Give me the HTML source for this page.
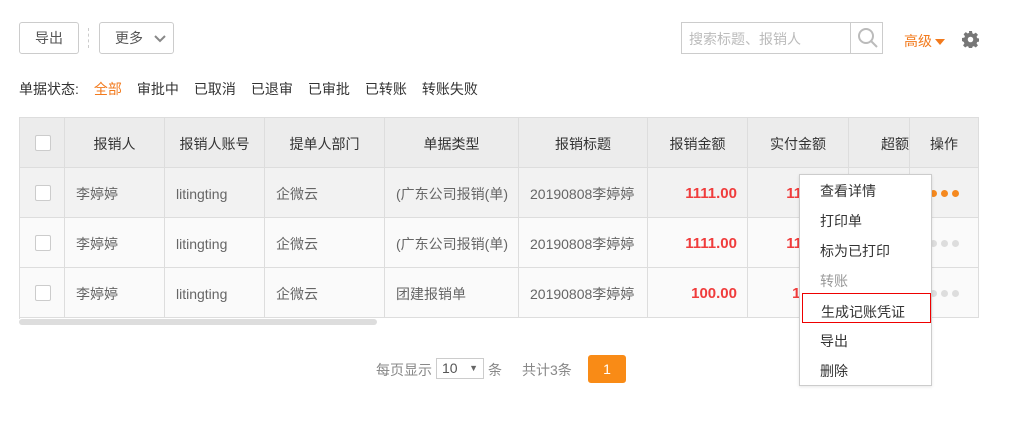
<!DOCTYPE html>
<html><head><meta charset="utf-8"><style>
*{box-sizing:border-box;margin:0;padding:0}
body{width:1015px;height:429px;background:#fff;font-family:"Liberation Sans","Noto Sans CJK SC",sans-serif;font-size:14px;color:#333;position:relative;overflow:hidden}
.a{position:absolute}
.btn{position:absolute;border:1px solid #ccc;border-radius:3px;height:32px;line-height:30px;text-align:center;color:#555;background:#fff}
.cell{position:absolute;border-right:1px solid #ddd;border-bottom:1px solid #ddd;white-space:nowrap;overflow:hidden;padding-left:11px;color:#666}
.h{background:#ececec;color:#333;text-align:center;padding-left:0}
.cb{width:16px;height:16px;border:1px solid #ccc;border-radius:2px;background:#fff;position:absolute;left:15px;top:17px}
.r{color:#f03c3c;font-weight:bold;font-size:15px;text-align:right;padding-right:10px;padding-left:0}
.dot{position:absolute;top:22px;width:7px;height:7px;border-radius:50%}
.mi{position:absolute;left:20px;color:#333;font-size:14px}
</style></head><body>
<div class="btn" style="left:19px;top:22px;width:60px">导出</div>
<div class="a" style="left:88px;top:28px;height:20px;border-left:1px dashed #ccc"></div>
<div class="btn" style="left:99px;top:22px;width:75px;text-align:left;padding-left:15px">更多 <svg width="12" height="8" style="position:absolute;left:54px;top:12px"><path d="M1 1l5 5 5-5" stroke="#888" stroke-width="2" fill="none"/></svg></div>
<div class="a" style="left:681px;top:22px;width:202px;height:32px;border:1px solid #ccc"><span style="position:absolute;left:7px;top:6px;color:#bbb;font-size:14px">搜索标题、报销人</span><div style="position:absolute;left:168px;top:0;height:30px;border-left:1px solid #ccc;width:32px"><svg width="22" height="22" style="position:absolute;left:6px;top:4px"><circle cx="9" cy="9" r="7" stroke="#bbb" stroke-width="2" fill="none"/><path d="M14 14l6 6" stroke="#bbb" stroke-width="2"/></svg></div></div>
<div class="a" style="left:904px;top:31px;color:#f27a1d">高级<svg width="10" height="6" style="margin-left:3px;vertical-align:middle"><path d="M0 0h10L5 6z" fill="#f27a1d"/></svg></div>
<svg class="a" style="left:962px;top:31px" width="17" height="17" viewBox="0 0 16 16"><path fill="#777" d="M6.6 0h2.8l.4 2.2 1.3.6 1.9-1.3 2 2-1.3 1.9.6 1.3 2.2.4v2.8l-2.2.4-.6 1.3 1.3 1.9-2 2-1.9-1.3-1.3.6-.4 2.2H6.6l-.4-2.2-1.3-.6-1.9 1.3-2-2 1.3-1.9-.6-1.3L0 9.4V6.6l2.2-.4.6-1.3-1.3-1.9 2-2 1.9 1.3 1.3-.6z"/><circle cx="8" cy="8" r="2.6" fill="#fff"/></svg>
<div class="a" style="left:19px;top:79px;color:#333">单据状态:<span style="color:#f27a1d;margin-left:15px">全部</span><span style="margin-left:15px">审批中</span><span style="margin-left:15px">已取消</span><span style="margin-left:15px">已退审</span><span style="margin-left:15px">已审批</span><span style="margin-left:15px">已转账</span><span style="margin-left:15px">转账失败</span></div>
<div class="a" style="left:19px;top:117px;width:960px;height:202px;border-top:1px solid #ddd;border-left:1px solid #ddd"></div>
<div id="t"></div>
<div class="a" style="left:19px;top:319px;width:358px;height:6px;border-radius:3px;background:#ddd"></div>
<script>
var cols=[19,65,165,265,385,519,648,748,849,910,979];
var rows=[117,168,218,268,318];
var head=['','报销人','报销人账号','提单人部门','单据类型','报销标题','报销金额','实付金额','超额','操作'];
var data=[['','李婷婷','litingting','企微云','(广东公司报销(单)','20190808李婷婷','1111.00','1111.00','',''],
['','李婷婷','litingting','企微云','(广东公司报销(单)','20190808李婷婷','1111.00','1111.00','',''],
['','李婷婷','litingting','企微云','团建报销单','20190808李婷婷','100.00','100.00','','']];
var h='';
for(var r=0;r<4;r++){var bg=r==0?'#ececec':(r==1?'#f2f2f2':'#fafafa');
for(var c=0;c<10;c++){var x=cols[c]+(c==0?1:0),w=cols[c+1]-cols[c]-(c==0?1:0),y=rows[r]+(r==0?1:0),hh=rows[r+1]-rows[r]-(r==0?1:0);
var cls='cell'+(r==0?' h':'');var txt=r==0?head[c]:data[r-1][c];var st='';
if(r>0&&(c==6||c==7)){cls+=' r';}
if(r==0&&c==8){st='text-align:right;padding-right:0';}
if(c==0)txt='<div class="cb"></div>';
if(r>0&&c==9){var col=r==1?'#f5891f':'#ddd';txt='<span class="dot" style="left:20px;background:'+col+'"></span><span class="dot" style="left:31px;background:'+col+'"></span><span class="dot" style="left:42px;background:'+col+'"></span>';st='padding-left:0';}
h+='<div class="'+cls+'" style="left:'+x+'px;top:'+y+'px;width:'+w+'px;height:'+hh+'px;line-height:'+(hh+2)+'px;background:'+bg+';'+st+'">'+txt+'</div>';}}
document.getElementById('t').innerHTML=h;
</script>
<div class="a" style="left:799px;top:174px;width:133px;height:212px;background:#fff;border:1px solid #ccc;box-shadow:0 1px 3px rgba(0,0,0,.1)">
<span class="mi" style="top:6px">查看详情</span>
<span class="mi" style="top:36px">打印单</span>
<span class="mi" style="top:66px">标为已打印</span>
<span class="mi" style="top:96px;color:#999">转账</span>
<div style="position:absolute;left:2px;top:118px;width:129px;height:30px;border:1px solid #e00"></div>
<span class="mi" style="top:127px;left:21px">生成记账凭证</span>
<span class="mi" style="top:156px">导出</span>
<span class="mi" style="top:186px">删除</span>
</div>
<div class="a" style="left:376px;top:360px;color:#888;font-size:14px">每页显示</div>
<div class="a" style="left:436px;top:358px;width:48px;height:21px;border:1px solid #ccc;color:#555;padding-left:5px;line-height:19px">10<span style="position:absolute;right:5px;font-size:9px;color:#666">▼</span></div>
<div class="a" style="left:488px;top:360px;color:#888">条</div>
<div class="a" style="left:522px;top:360px;color:#888">共计3条</div>
<div class="a" style="left:588px;top:355px;width:38px;height:28px;background:#f98b16;border-radius:3px;color:#fff;text-align:center;line-height:28px">1</div>
</body></html>
